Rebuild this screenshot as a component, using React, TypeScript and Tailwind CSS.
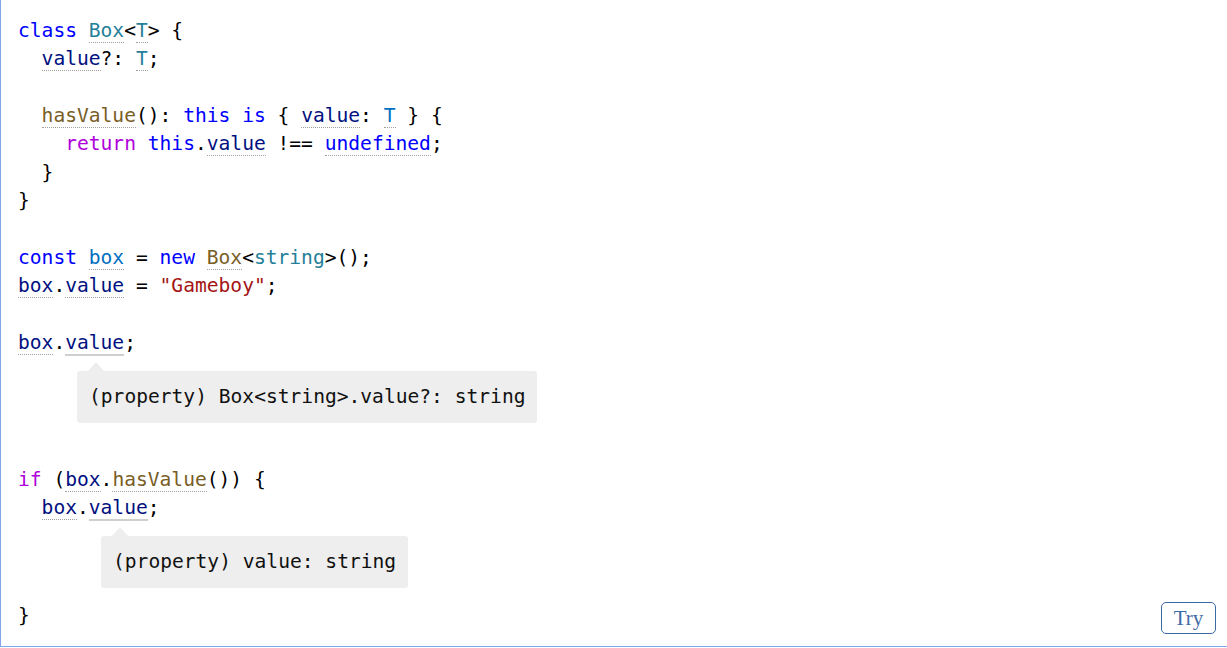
const KW = 'text-[#0000ff]';
const CTRL = 'text-[#af00db]';
const TYPE = 'text-[#267f99]';
const FN = 'text-[#795e26]';
const PROP = 'text-[#001080]';
const CONST = 'text-[#0070c1]';
const STR = 'text-[#a31515]';

// [text, colour, underline] — 'd' dotted, 'h' hovered (solid grey)
type Tok = [string, string?, ('d' | 'h')?];

const LINES: Tok[][] = [
  [['class', KW], [' '], ['Box', TYPE, 'd'], ['<'], ['T', TYPE, 'd'], ['> {']],
  [['  '], ['value', PROP, 'd'], ['?: '], ['T', TYPE, 'd'], [';']],
  [],
  [
    ['  '],
    ['hasValue', FN, 'd'],
    ['(): '],
    ['this', KW],
    [' '],
    ['is', KW],
    [' { '],
    ['value', PROP, 'd'],
    [': '],
    ['T', CONST, 'd'],
    [' } {'],
  ],
  [
    ['    '],
    ['return', CTRL],
    [' '],
    ['this', KW],
    ['.'],
    ['value', PROP, 'd'],
    [' !== '],
    ['undefined', KW, 'd'],
    [';'],
  ],
  [['  }']],
  [['}']],
  [],
  [
    ['const', KW],
    [' '],
    ['box', CONST, 'd'],
    [' = '],
    ['new', KW],
    [' '],
    ['Box', FN, 'd'],
    ['<'],
    ['string', TYPE],
    ['>();'],
  ],
  [['box', PROP, 'd'], ['.'], ['value', PROP, 'd'], [' = '], ['"Gameboy"', STR], [';']],
  [],
  [['box', PROP, 'd'], ['.'], ['value', PROP, 'h'], [';']],
];

const LINES_AFTER: Tok[][] = [
  [],
  [['if', CTRL], [' ('], ['box', PROP, 'd'], ['.'], ['hasValue', FN, 'd'], ['()) {']],
  [['  '], ['box', PROP, 'd'], ['.'], ['value', PROP, 'h'], [';']],
];

function Line({ toks }: { toks: Tok[] }) {
  return (
    <div className="h-[28.36px] leading-[28.36px] whitespace-pre">
      {toks.map(([text, color, deco], i) => (
        <span
          key={i}
          className={`${color ?? 'text-black'} ${
            deco === 'd'
              ? 'border-b border-dotted border-[#a0a0a0]'
              : deco === 'h'
                ? 'border-b-2 border-solid border-[#cfcfcf]'
                : ''
          }`}
        >
          {text}
        </span>
      ))}
      {toks.length === 0 ? ' ' : null}
    </div>
  );
}

function Popover({ left, text }: { left: string; text: string }) {
  return (
    <div className={`relative mt-[14px] mb-[14px] ${left}`}>
      <div className="absolute -top-[9px] left-[11px] w-0 h-0 border-x-[8px] border-x-transparent border-b-[9px] border-b-[#eeeeee]" />
      <div className="inline-block bg-[#eeeeee] rounded-[3px] px-3 h-[52px] leading-[52px] text-[#111] whitespace-pre">
        {text}
      </div>
    </div>
  );
}

export default function App() {
  return (
    <div className="relative w-[1227px] h-[647px] bg-white border-l border-b border-[#7fa6ec] overflow-hidden">
      <div
        className="pl-[17px] pt-[17px] text-[19.6px]"
        style={{ fontFamily: '"DejaVu Sans Mono", "Liberation Mono", monospace' }}
      >
        {LINES.map((toks, i) => (
          <Line key={i} toks={toks} />
        ))}
        <Popover left="ml-[59px]" text="(property) Box<string>.value?: string" />
        {LINES_AFTER.map((toks, i) => (
          <Line key={i} toks={toks} />
        ))}
        <Popover left="ml-[83px]" text="(property) value: string" />
        <Line toks={[['}']]} />
      </div>
      <button
        type="button"
        className="absolute right-[11px] bottom-[12px] w-[55px] h-[32px] border border-[#3d6aa5] rounded-[5px] text-[#3d6aa5] text-[21px] leading-[28px] bg-white"
        style={{ fontFamily: '"Liberation Serif", serif' }}
      >
        Try
      </button>
    </div>
  );
}
